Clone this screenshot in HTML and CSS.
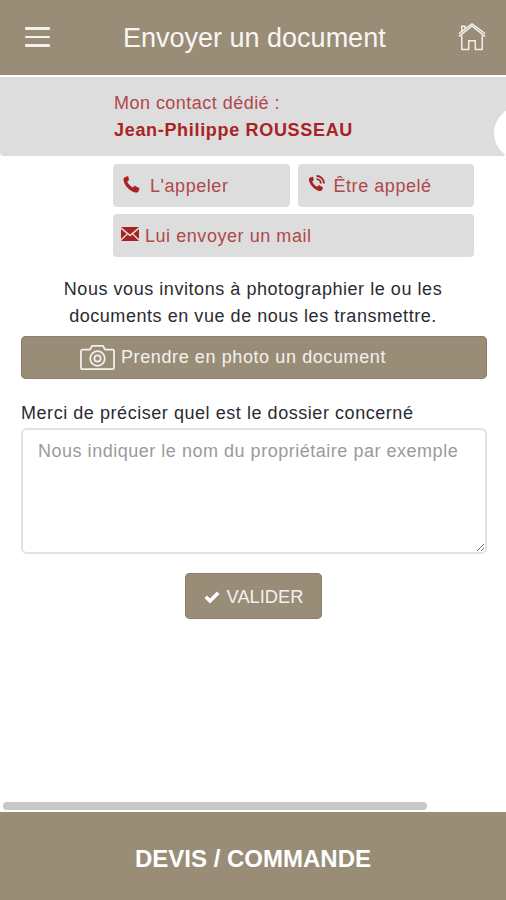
FILE: index.html
```html
<!DOCTYPE html>
<html lang="fr">
<head>
<meta charset="utf-8">
<title>Envoyer un document</title>
<link rel="stylesheet" href="styles.css">
</head>
<body>
<div class="app">
  <header class="topbar">
    <div class="burger"><span></span><span></span><span></span></div>
    <h1 class="title">Envoyer un document</h1>
    <svg class="home" viewBox="0 0 30 30" fill="none" stroke="#f4f1ec" stroke-width="1.6" stroke-linejoin="round" stroke-linecap="round">
      <path d="M1.5 14 15 3 28.5 14"/>
      <path d="M1.5 11 15 0.8 28.5 11"/>
      <path d="M4 14V28.5H11.5V19H18.5V28.5H26V14"/>
      <path d="M4 9V3.5H7.5V6"/>
    </svg>
  </header>
  <main class="content">
    <section class="contact">
      <p class="contact-label">Mon contact dédié :</p>
      <p class="contact-name">Jean-Philippe ROUSSEAU</p>
      <span class="contact-tab"></span>
    </section>
    <div class="actions">
      <a class="action call">
        <svg class="ic-phone" viewBox="0 0 24 24" fill="#a92325"><path d="M6.6 1.5 3 3C1.6 3.8 1.6 6 2.4 8.5c1.7 5.6 7.2 11.4 13 13.2 2.2.6 4.2.6 5.2-.7l1.4-3.3c.2-.5 0-1-.4-1.3l-4.7-2.6c-.5-.3-1-.2-1.4.2l-1.7 1.9c-3-1.4-5.8-4.3-7.2-7.3l1.8-1.6c.4-.4.5-.9.3-1.4L8 2c-.3-.5-.9-.7-1.4-.5z"/></svg>
        <span>L'appeler</span>
      </a>
      <a class="action called">
        <svg class="ic-phone" viewBox="0 0 24 24" fill="#a92325"><path d="M6.6 3.5 3.5 4.8C2.2 5.5 2.2 7.4 2.9 9.6c1.5 5 6.3 10 11.4 11.6 2 .5 3.7.5 4.6-.6l1.2-2.9c.2-.4 0-.9-.3-1.1l-4.2-2.3c-.4-.3-.9-.2-1.2.2l-1.5 1.6c-2.6-1.2-5-3.7-6.3-6.4l1.6-1.4c.4-.3.4-.8.3-1.2L7.8 4c-.2-.5-.8-.7-1.2-.5z"/><path d="M12 2.5a9.5 9.5 0 0 1 9.5 9.5M12 6.5a5.5 5.5 0 0 1 5.5 5.5" fill="none" stroke="#a92325" stroke-width="2.4"/></svg>
        <span>Être appelé</span>
      </a>
      <a class="action mail">
        <svg class="ic-mail" viewBox="0 0 18 14" fill="#a92325"><path d="M0 0H18L9 7.5z"/><path d="M0 2 5.6 6.7 0 12zM18 2 12.4 6.7 18 12zM0 14 6.7 7.6 9 9.5 11.3 7.6 18 14z"/></svg>
        <span>Lui envoyer un mail</span>
      </a>
    </div>
    <p class="intro">Nous vous invitons à photographier le ou les<br>documents en vue de nous les transmettre.</p>
    <button class="photo-btn" type="button">
      <svg class="ic-camera" viewBox="0 0 36 27" fill="none" stroke="#f4f1ec" stroke-width="1.8" stroke-linejoin="round">
        <path d="M3 5.5H10L12.5 1.5H23.5L26 5.5H33.5Q35 5.5 35 7V24Q35 25.5 33.5 25.5H3Q1 25.5 1 24V7Q1 5.5 3 5.5Z"/>
        <circle cx="18" cy="14.5" r="7.5"/>
        <circle cx="18" cy="14.5" r="3.2"/>
      </svg>
      <span>Prendre en photo un document</span>
    </button>
    <label class="field-label" for="dossier">Merci de préciser quel est le dossier concerné</label>
    <textarea class="field" id="dossier" placeholder="Nous indiquer le nom du propriétaire par exemple"></textarea>
    <button class="submit" type="button">
      <svg class="ic-check" viewBox="0 0 16 13" fill="#fff"><path d="M0.5 7 3 4.5 6 7.5 13 0.5 15.5 3 6 12.5z"/></svg>
      <span>VALIDER</span>
    </button>
    <div class="scroll-track"><span class="scroll-thumb"></span></div>
  </main>
  <footer class="bottombar">DEVIS / COMMANDE</footer>
</div>
</body>
</html>
```
FILE: styles.css
```css
* { box-sizing: border-box; }
html, body { margin: 0; height: 100%; overflow: hidden; }
body { font-family: "Liberation Sans", Arial, sans-serif; background: #fff; color: #222; }
.app { height: 900px; display: flex; flex-direction: column; }

.topbar {
  height: 75px; flex: none; background: #998d78; display: flex; align-items: center;
  padding: 0 20px 0 25px; color: #fff;
}
.burger { width: 25px; display: flex; flex-direction: column; gap: 6px; margin-top: -1px; }
.burger span { display: block; height: 2.5px; background: #f4f1ec; border-radius: 1px; }
.title { margin: 1px 0 0 73px; font-size: 27px; font-weight: 400; flex: 1; white-space: nowrap; color: #f8f6f2; }
.home { width: 28px; height: 30px; margin-top: -1px; }

.content { flex: 1; display: flex; flex-direction: column; position: relative; overflow: hidden; padding-top: 2px; }

.contact {
  position: relative; height: 79px; background: #dddddd; border-radius: 0 0 4px 4px;
  padding: 15px 0 0 114px; color: #a92325;
}
.contact-label { margin: 0; font-size: 18px; letter-spacing: 0.47px; line-height: 22px; color: #b2474a; }
.contact-name { margin: 5px 0 0; font-size: 18px; letter-spacing: 0.68px; line-height: 22px; font-weight: 700; }
.contact-tab {
  position: absolute; left: 494px; top: 28px; width: 60px; height: 56px; border-radius: 50%; background: #fff;
}

.actions {
  margin: 8px 32px 0 113px; display: grid; grid-template-columns: 1fr 1fr; gap: 7px 8px;
}
.action {
  height: 43px; background: #dddddd; border-radius: 4px; display: flex; align-items: center;
  color: #b0484a; font-size: 18px; letter-spacing: 0.55px; padding-left: 9px;
}
.action span { margin-top: 1px; }
.call .ic-phone { margin-right: 9px; margin-top: -3px; }
.called .ic-phone { margin-right: 8px; margin-top: -4px; }
.ic-phone { width: 19px; height: 19px; flex: none; }
.mail { grid-column: 1 / 3; padding-left: 8px; }
.ic-mail { width: 18px; height: 14px; flex: none; margin-right: 6px; margin-top: -3px; }

.intro { margin: 19px 0 0; text-align: center; font-size: 18px; letter-spacing: 0.55px; line-height: 27px; color: #2b2b33; }

.photo-btn {
  margin: 6px 19px 0 21px; height: 43px; flex: none; background: #998d78; border: 0; border-radius: 5px;
  box-shadow: inset 0 0 0 1px #8a7f6c; display: flex; align-items: center; padding: 0 0 0 59px;
  color: #f4f1ec; font: 18px "Liberation Sans", Arial, sans-serif; letter-spacing: 0.6px;
}
.ic-camera { width: 35px; height: 27px; margin-right: 6px; }

.field-label { margin: 23px 0 0 21px; font-size: 18px; letter-spacing: 0.55px; line-height: 22px; color: #2b2b33; }
.field {
  display: block; margin: 4px 19px 0 21px; height: 126px; flex: none; width: 466px; border: 2px solid #e2e2e2;
  border-radius: 6px; padding: 9px 15px; font: 18px/24px "Liberation Sans", Arial, sans-serif; letter-spacing: 0.52px; background: #fff; color: #222;
}
.field::placeholder { color: #9a9a9a; opacity: 1; }

.submit {
  align-self: flex-start; margin: 19px 0 0 185px; width: 137px; height: 46px; background: #998d78; border: 0;
  border-radius: 5px; box-shadow: inset 0 0 0 1px #8a7f6c; display: flex; align-items: center; justify-content: center; gap: 7px;
  color: #f4f1ec; font: 18.3px "Liberation Sans", Arial, sans-serif; padding: 2px 0 0;
}
.ic-check { width: 16px; height: 13px; }

.scroll-track { position: absolute; left: 3px; top: 727px; width: 424px; height: 8px; }
.scroll-thumb { display: block; height: 8px; border-radius: 4px; background: #c8c8c8; }

.bottombar {
  height: 88px; flex: none; background: #998d78; color: #fff; display: flex; align-items: center; justify-content: center;
  font-size: 24px; font-weight: 700; padding-top: 6px;
}
```
